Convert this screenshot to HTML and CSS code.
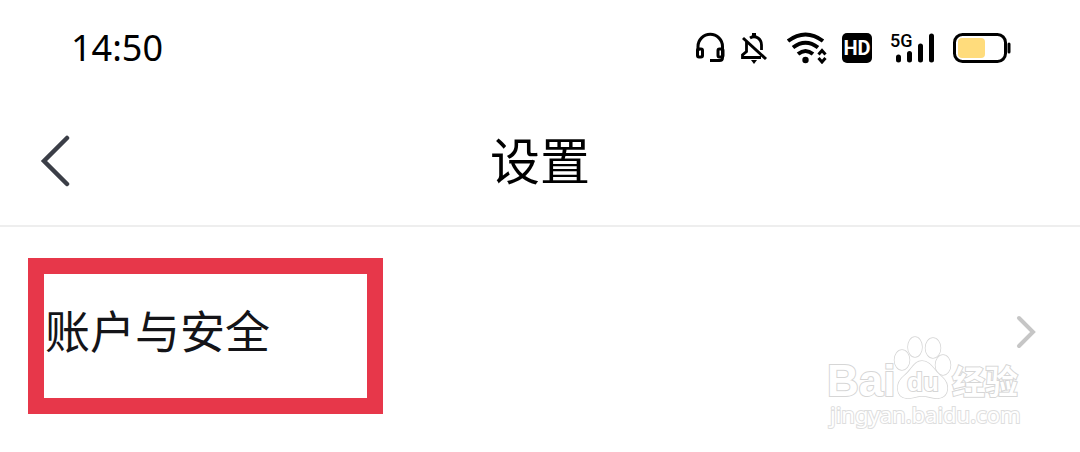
FILE: index.html
```html
<!DOCTYPE html>
<html lang="zh-CN">

<head>
    <meta charset="UTF-8">
    <meta name="viewport" content="width=device-width, initial-scale=1.0">
    <title>设置</title>

    <link rel="stylesheet" href="styles.css">
</head>

<body>
    <div class="status">
        <time class="hora">14:50</time>

        <div class="icons">
            <!-- headset -->
            <svg width="32" height="32" viewBox="0 0 32 32" fill="none" stroke="#000" stroke-width="3">
                <path d="M4 19V14.500a12 12 0 0 1 24.500 0V25.500q0 3-3 3H16" />
                <rect x="3.500" y="17" width="5" height="8" rx="1.500" />
                <rect x="24" y="17" width="5" height="8" rx="1.500" />
            </svg>

            <!-- muted bell -->
            <svg class="bell" width="28" height="32" viewBox="0 0 28 32" fill="none" stroke="#000" stroke-width="2.800">
                <path d="M10 6Q14 3.500 18 6Q21.500 8.500 21.500 13V18M6.500 10V19.500L2.500 23V25.500H21" />
                <path d="M14 1v4" stroke-width="4" />
                <path d="M3 6L26 27" stroke-width="3" />
                <path d="M11 28h6l-3 4z" fill="#000" stroke="none" />
            </svg>

            <!-- wifi -->
            <svg class="wifi" width="42" height="32" viewBox="0 0 42 32" fill="none" stroke="#000" stroke-width="4">
                <path d="M2 9Q19.500-4 37 9" />
                <path d="M7 15.500Q19.500 6 32 15.500" />
                <path d="M12 22Q19.500 16 27 22" />
                <circle cx="19.500" cy="28" r="3.200" fill="#000" stroke="none" />
                <path d="M32.500 22.500l3.500-4 3.500 4M32.500 26l3.500 4 3.500-4" stroke-width="3" />
            </svg>

            <span class="hd">HD</span>

            <div class="signal">
                <span class="net">5G</span>
                <svg width="46" height="32" viewBox="0 0 46 32" stroke="#000" stroke-width="5" stroke-linecap="round">
                    <path d="M8.500 25v3M19.500 21.500v6.500M30.500 14v14M41.500 4v24" />
                </svg>
            </div>

            <!-- battery -->
            <svg class="battery" width="60" height="32" viewBox="0 0 60 32">
                <rect x="2.500" y="2.500" width="51" height="27" rx="8" fill="none" stroke="#000" stroke-width="3" />
                <rect x="6" y="6" width="27" height="20" rx="4" fill="#ffdc7c" />
                <path d="M57 12v8" stroke="#000" stroke-width="3" stroke-linecap="round" />
            </svg>
        </div>
    </div>

    <header>
        <button class="back" type="button" aria-label="返回">
            <svg width="32" height="52" viewBox="0 0 32 52" fill="none" stroke="#3b3e47" stroke-width="4.500" stroke-linecap="round">
                <path d="M27 3L4 26L27 49" />
            </svg>
        </button>
        <h1>设置</h1>
    </header>

    <main>
        <a class="item" href="#cuenta">
            <span class="marco">账户与安全</span>
            <svg class="flecha" width="20" height="36" viewBox="0 0 20 36" fill="none" stroke="#c6c6c6" stroke-width="4" stroke-linecap="round">
                <path d="M3 4L17 18L3 32" />
            </svg>
        </a>

        <!-- watermark -->
        <svg class="marca" width="208" height="108" viewBox="0 0 208 108" fill="#fff" stroke="#d6d6d6" stroke-width="2">
            <text class="logo" x="6" y="67">Bai</text>
            <g stroke-width="1.500">
                <ellipse cx="81" cy="31" rx="7.500" ry="10" />
                <ellipse cx="94" cy="18" rx="7" ry="10" />
                <ellipse cx="112" cy="19" rx="7.500" ry="10" />
                <ellipse cx="122" cy="36" rx="7.500" ry="10" />
                <path d="M101 32C93 32 91 41 83 47C74 54 75 68 85 69C92 70 95 67 101 67C108 67 112 70 118 69C128 68 129 55 121 48C113 42 110 32 101 32Z" />
            </g>
            <text class="du" x="86" y="62">du</text>
            <text class="cjk" x="131" y="65">经验</text>
            <text class="url" x="9" y="94">jingyan.baidu.com</text>
        </svg>
    </main>
</body>

</html>
```
FILE: styles.css
```css
* {
    padding: 0;
    margin: 0;
    text-decoration: none;
    box-sizing: border-box;
}

body {
    background: white;
    color: black;
    font-family: "Noto Sans CJK SC", sans-serif;
}

.status {
    height: 96px;
    padding-left: 71px;
    padding-right: 68px;
    display: flex;
    align-items: center;
    justify-content: space-between;
}

.hora {
    font-family: "Noto Sans", sans-serif;
    font-size: 36px;
    line-height: 48px;
}

.icons {
    display: flex;
    align-items: center;
}

.bell {
    margin-left: 14px;
}

.wifi {
    margin-left: 18px;
}

.hd {
    width: 30px;
    height: 30px;
    margin-left: 14px;
    border-radius: 5px;
    background-color: black;
    color: white;
    font-family: "Roboto", sans-serif;
    font-size: 20px;
    font-weight: bold;
    line-height: 30px;
    text-align: center;
}

.signal {
    height: 32px;
    margin-left: 18px;
    position: relative;
}

.net {
    position: absolute;
    top: 0;
    left: 0;
    font-family: "Roboto", sans-serif;
    font-size: 18px;
    font-weight: 500;
    line-height: 18px;
}

.battery {
    margin-left: 16px;
}

header {
    height: 131px;
    padding-left: 40px;
    padding-right: 40px;
    border-bottom: 2px solid #eeeeee;
    display: grid;
    grid-template-columns: 32px 1fr 32px;
    align-items: center;
}

.back {
    height: 52px;
    border: none;
    background: none;
    cursor: pointer;
}

h1 {
    padding-bottom: 6px;
    font-size: 50px;
    font-weight: normal;
    line-height: 64px;
    text-align: center;
}

main {
    position: relative;
}

.item {
    padding: 31px 44px 38px 28px;
    color: #141418;
    display: flex;
    align-items: center;
    justify-content: space-between;
}

.marco {
    width: 355px;
    padding: 24px 1px 36px;
    border: 16px solid #e7374a;
    font-size: 45px;
    line-height: 64px;
}

.flecha {
    margin-bottom: 8px;
}

.marca {
    position: absolute;
    right: 51px;
    bottom: 15px;
    paint-order: stroke;
}

.logo {
    font: bold 44px "Liberation Sans", sans-serif;
}

.du {
    font: bold 26px "Liberation Sans", sans-serif;
}

.cjk {
    font: bold 33px "Noto Sans CJK SC", sans-serif;
}

.url {
    font: 22px "Noto Sans", sans-serif;
    stroke: #dedede;
}
```
